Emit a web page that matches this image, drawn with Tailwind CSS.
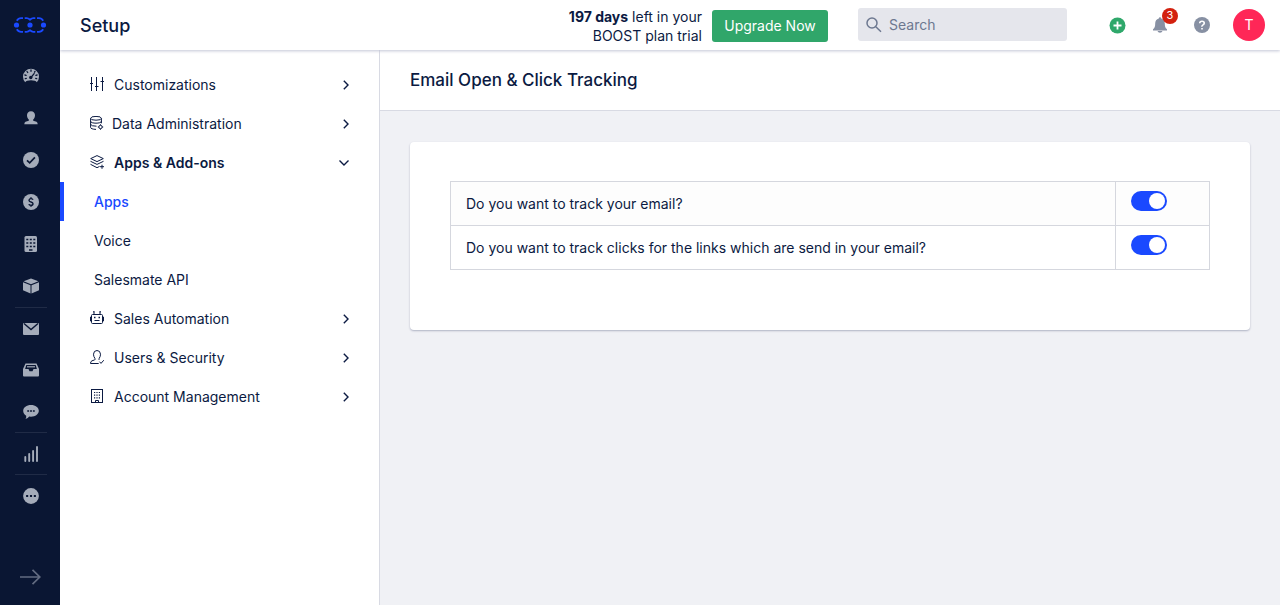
<!DOCTYPE html>
<html lang="en">
<head>
<meta charset="utf-8">
<meta name="viewport" content="width=device-width, initial-scale=1">
<title>Setup - Email Open &amp; Click Tracking</title>
<script src="https://cdn.jsdelivr.net/npm/@tailwindcss/browser@4"></script>
</head>
<body class="flex min-h-screen bg-[#f0f1f5] font-['Inter',sans-serif] text-sm text-[#0b1a42]">

<aside class="z-20 flex w-15 shrink-0 flex-col items-center bg-[#0a1633] text-[#a5acba]">
  <a href="#" aria-label="Home" class="flex h-[50px] items-center text-[#1a49ff]">
    <svg width="34" height="18" viewBox="0 0 34 18" fill="none" stroke="currentColor" stroke-width="1.800">
      <path d="M3.800 4.800Q5.300 2.200 8 2.200h2M11.700 2.200h2q1.500 0 3.300 1.500 1.800-1.500 3.300-1.500h2M24 2.200h2q2.700 0 4.200 2.600M3.800 13.200Q5.300 15.800 8 15.800h2M11.700 15.800h2q1.500 0 3.300-1.500 1.800 1.500 3.300 1.500h2M24 15.800h2q2.700 0 4.200-2.600"/>
      <g fill="currentColor" stroke="none"><circle cx="3.500" cy="9" r="2.600"/><circle cx="17" cy="9" r="2.600"/><circle cx="30.500" cy="9" r="2.600"/></g>
    </svg>
  </a>
  <nav aria-label="Main" class="flex flex-col pt-[5px] pl-[2px]">
    <a href="#" aria-label="Dashboard" class="flex h-[42px] w-8 items-center justify-center">
      <svg width="16" height="16" viewBox="0 0 16 16"><path fill="currentColor" d="M2.200 14.200A8 8 0 1 1 13.800 14.200Q12.500 12.300 8 12.300T2.200 14.200Z"/><g stroke="#0a1633" stroke-width="1.300" stroke-linecap="round"><path d="M8 2v1.300M4 3.500l.7 1M12 3.500l-.5.700M1.900 7l1.200.3M14.100 7l-1.200.3M2.300 10.600l1-.2M13.700 10.600l-1-.2M8.300 9.200l2.800-3.600"/></g><circle cx="7.800" cy="9.500" r="1.700" fill="#0a1633"/></svg>
    </a>
    <a href="#" aria-label="Contacts" class="flex h-[42px] w-8 items-center justify-center">
      <svg width="16" height="16" viewBox="0 0 16 16" fill="currentColor"><path d="M8 1.200c2.600 0 4 1.700 4 4 0 1.700-.7 3.400-1.800 4.300v1.300l3.300 1q1.200.5 1.200 2.500H1.300q0-2 1.200-2.500l3.300-1V9.500C4.700 8.600 4 6.900 4 5.200c0-2.300 1.400-4 4-4Z"/></svg>
    </a>
    <a href="#" aria-label="Activities" class="flex h-[42px] w-8 items-center justify-center">
      <svg width="16" height="16" viewBox="0 0 16 16"><circle cx="8" cy="8" r="8" fill="currentColor"/><path d="M4 8.300l2.700 2.500 5.200-5.400" fill="none" stroke="#0a1633" stroke-width="1.700"/></svg>
    </a>
    <a href="#" aria-label="Deals" class="flex h-[42px] w-8 items-center justify-center">
      <svg width="16" height="16" viewBox="0 0 16 16"><circle cx="8" cy="8" r="8" fill="currentColor"/><path d="M10 5.800Q9.600 4.600 8 4.600T6 6.200Q6 7.500 8 8t2 1.700q0 1.600-2 1.600T6 10.100M8 3.300v1.300M8 11.400v1.300" fill="none" stroke="#0a1633" stroke-width="1.400"/></svg>
    </a>
    <a href="#" aria-label="Companies" class="flex h-[42px] w-8 items-center justify-center">
      <svg width="16" height="16" viewBox="0 0 16 16"><rect x="1.500" y="0" width="12.500" height="16" rx="1.500" fill="currentColor"/><path d="M3.300 3.500h2m1.500 0h2m1.500 0h2M3.300 7h2m1.500 0h2m1.500 0h2M3.300 10.500h2m1.500 0h2m1.500 0h2M6 14h3.500" fill="none" stroke="#0a1633" stroke-width="1.500"/></svg>
    </a>
    <a href="#" aria-label="Products" class="flex h-[42px] w-8 items-center justify-center">
      <svg width="16" height="16" viewBox="0 0 16 16" fill="currentColor"><path d="M8 .4l7.400 2.900L8 6.300.6 3.300ZM0 4.300l7.500 3v8.200L0 12.300ZM16 4.300l-7.500 3v8.200l7.500-3.200Z"/></svg>
    </a>
    <a href="#" aria-label="Email" class="flex h-[42px] w-8 items-center justify-center border-t border-[#202b46]">
      <svg width="16" height="16" viewBox="0 0 16 16"><rect y="2" width="16" height="12" rx="1" fill="currentColor"/><path d="M1 2.500l7 6 7-6" fill="none" stroke="#0a1633" stroke-width="1.400"/></svg>
    </a>
    <a href="#" aria-label="Inbox" class="flex h-[42px] w-8 items-center justify-center">
      <svg width="16" height="16" viewBox="0 0 16 16"><path d="M2.500 1.500h11L16 7v6.500q0 1-1 1H1q-1 0-1-1V7Z" fill="currentColor"/><path d="M3.300 3h9.400l1.200 4h-3.400l-1 2.300h-3L5.500 7H2.100Z" fill="#0a1633"/><path d="M4 4.800h8" stroke="currentColor" stroke-width="1.200"/></svg>
    </a>
    <a href="#" aria-label="Chat" class="flex h-[42px] w-8 items-center justify-center border-b border-[#202b46]">
      <svg width="16" height="16" viewBox="0 0 17 16"><path d="M8.500.5c4.700 0 8.300 2.800 8.300 6.300s-3.600 6.300-8.300 6.300l-1.900-.2q-1.300 2-3.900 2.600 1-1.600.7-3.500C1.300 10.800.2 8.900.2 6.800.2 3.300 3.800.5 8.500.5Z" fill="currentColor"/><path d="M4.500 7h2m1 0h2m1 0h2" stroke="#0a1633" stroke-width="1.600"/></svg>
    </a>
    <a href="#" aria-label="Reports" class="flex h-[42px] w-8 items-center justify-center border-b border-[#202b46]">
      <svg width="16" height="16" viewBox="0 0 16 16" fill="none" stroke="currentColor" stroke-width="1.900" stroke-linecap="round"><path d="M2.300 11v4M6.200 8v7M10.100 5v10M14 1v14"/></svg>
    </a>
    <a href="#" aria-label="More" class="flex h-[42px] w-8 items-center justify-center">
      <svg width="16" height="16" viewBox="0 0 17 17"><circle cx="8.500" cy="8.500" r="8.400" fill="currentColor"/><path d="M3.300 8.500h2.200M7.400 8.500h2.200M11.500 8.500h2.200" stroke="#0a1633" stroke-width="2"/></svg>
    </a>
  </nav>
  <button type="button" aria-label="Expand menu" class="mt-auto mb-5 text-[#626b81]">
    <svg width="21" height="16" viewBox="0 0 21 16" fill="none" stroke="currentColor" stroke-width="1.700"><path d="M0 8h20M12.500.8 19.800 8l-7.300 7.200"/></svg>
  </button>
</aside>

<div class="flex min-w-0 grow flex-col">
  <header class="z-10 flex h-[50px] shrink-0 items-center bg-white pr-[15px] pl-5 shadow-[0_1px_3px_#c2c5d6]">
    <h1 class="mt-[2px] mr-auto text-lg font-medium">Setup</h1>
    <p class="mt-[2px] mr-[10px] text-right leading-[19px]"><strong class="font-bold">197 days</strong> left in your<br>BOOST plan trial</p>
    <button type="button" class="mt-[2px] mr-[30px] h-8 w-[116px] rounded-[3px] bg-[#30a66a] whitespace-nowrap text-white">Upgrade Now</button>
    <label class="mr-[42px] mb-[1px] flex h-[33px] w-[209px] items-center gap-[7px] rounded-[3px] bg-[#e5e6ec] pl-2 text-[#6d7890]">
      <svg class="shrink-0" width="16" height="16" viewBox="0 0 16 16" fill="none" stroke="currentColor" stroke-width="1.500"><circle cx="6" cy="6" r="5"/><path d="M9.800 9.800l5.200 5"/></svg>
      <input type="search" aria-label="Search" placeholder="Search" class="w-full min-w-0 bg-transparent outline-none placeholder:text-[#6d7890]">
    </label>
    <button type="button" aria-label="Add" class="mr-[26px]">
      <svg width="17" height="17" viewBox="0 0 17 17"><circle cx="8.500" cy="8.500" r="8" fill="#2fa86b"/><path d="M8.500 4.500v8M4.500 8.500h8" stroke="#fff" stroke-width="1.800"/></svg>
    </button>
    <button type="button" aria-label="Notifications, 3 new" class="relative mr-[26px]">
      <svg width="16" height="16" viewBox="0 0 16 16" fill="#8790a3"><path d="M8 .3q1.200 0 1.200 1.200c2.400.6 3.600 2.500 3.600 5 0 3 .5 4.600 2.200 5.800v1.100H1v-1.100c1.700-1.200 2.200-2.800 2.200-5.800 0-2.500 1.200-4.400 3.600-5Q6.800.3 8 .3ZM5.500 14h5q-.5 1.800-2.500 1.800T5.500 14Z"/></svg>
      <span class="absolute -top-[9px] left-[10px] flex size-4 items-center justify-center rounded-full bg-[#d3210f] text-[11px] text-white">3</span>
    </button>
    <button type="button" aria-label="Help" class="mr-[23px]">
      <svg width="16" height="16" viewBox="0 0 16 16"><circle cx="8" cy="8" r="8" fill="#8790a3"/><path d="M5.700 6.200Q5.800 4.200 8 4.200t2.300 1.900Q10.300 7.200 9 7.900T8 9.700M8 10.900v1.700" fill="none" stroke="#fff" stroke-width="1.600"/></svg>
    </button>
    <button type="button" aria-label="Account" class="size-8 rounded-full bg-[#ff2757] text-white">T</button>
  </header>

  <div class="flex grow">
    <nav aria-label="Setup" class="w-80 shrink-0 border-r border-[#d8dae3] bg-white pt-[15px]">
      <ul>
        <li><a href="#" class="flex h-[39px] items-center pr-7 pl-[30px]">
          <svg class="mr-[10px] mb-[1px]" width="14" height="14" viewBox="0 0 14 14" fill="none" stroke="currentColor"><path d="M1.500 0v14M6.500 0v14M12.500 0v14M0 6.500h3M5 9.500h3.500M10.500 4.500H14"/></svg>
          <span class="grow">Customizations</span>
          <svg width="10" height="10" viewBox="0 0 10 10" fill="none" stroke="currentColor" stroke-width="1.400"><path d="M2.800.8 7 5 2.800 9.200"/></svg></a></li>
        <li><a href="#" class="flex h-[39px] items-center pr-7 pl-[30px]">
          <svg class="mr-[8px] mb-[1px]" width="14" height="14" viewBox="0 0 14 14" fill="none" stroke="currentColor"><ellipse cx="6" cy="2.300" rx="5.400" ry="1.900"/><path d="M.6 2.300v9.200c0 .9 2 1.800 5.400 1.900M11.400 2.300v5M.6 5.300C.6 7.800 11.400 7.800 11.400 5.300M.6 8.400q.8 1.800 5.900 1.800"/><circle cx="10.500" cy="11" r="1.700"/><path d="M10.500 8.300v1M10.500 12.700v1M7.800 11h1M12.200 11h1"/></svg>
          <span class="grow">Data Administration</span>
          <svg width="10" height="10" viewBox="0 0 10 10" fill="none" stroke="currentColor" stroke-width="1.400"><path d="M2.800.8 7 5 2.800 9.200"/></svg></a></li>
        <li><a href="#" aria-expanded="true" class="flex h-[39px] items-center pr-[30px] pl-[30px] font-semibold">
          <svg class="mr-[10px] mb-[1px]" width="14" height="14" viewBox="0 0 14 14" fill="none" stroke="currentColor"><path d="M7 .6l6.300 3L7 6.600.7 3.600ZM.5 6.300 7 9.400l6.500-3.100M.5 9.300 7 12.700l2.600-1.300M12 9.700v4.100M10 11.700h4"/></svg>
          <span class="grow">Apps &amp; Add-ons</span>
          <svg width="10" height="10" viewBox="0 0 10 10" fill="none" stroke="currentColor" stroke-width="1.400"><path d="M.5 2.500 5 7l4.500-4.500"/></svg></a>
          <ul>
            <li><a href="#" aria-current="page" class="flex h-[39px] items-center border-l-4 border-[#1a49ff] pl-[30px] font-medium text-[#1a49ff]">Apps</a></li>
            <li><a href="#" class="flex h-[39px] items-center pl-[34px]">Voice</a></li>
            <li><a href="#" class="flex h-[39px] items-center pl-[34px]">Salesmate API</a></li>
          </ul>
        </li>
        <li><a href="#" class="flex h-[39px] items-center pr-7 pl-[30px]">
          <svg class="mr-[10px] mb-[1px]" width="14" height="14" viewBox="0 0 14 14" fill="none" stroke="currentColor"><rect x="1.500" y="3.500" width="11" height="9" rx="1"/><path d="M4 3.500V.5M3 .8h1.500M10 3.500V.5M9.500.8H11M1.500 6H.5v4h1M12.500 6h1v4h-1M4.500 9.500h5"/><path d="M4 6.500h1.500M8.500 6.500H10" stroke-width="1.500"/></svg>
          <span class="grow">Sales Automation</span>
          <svg width="10" height="10" viewBox="0 0 10 10" fill="none" stroke="currentColor" stroke-width="1.400"><path d="M2.800.8 7 5 2.800 9.200"/></svg></a></li>
        <li><a href="#" class="flex h-[39px] items-center pr-7 pl-[30px]">
          <svg class="mr-[10px] mb-[1px]" width="14" height="14" viewBox="0 0 14 14" fill="none" stroke="currentColor"><path d="M8.700 13.500H.5q0-2.200 1.500-2.700l2.700-.9q.8-.5.200-1.500Q3.500 6.500 3.500 4.200 3.700.5 7 .5t3.500 3.700q0 2.300-1.300 4.200-.6 1.200.3 1.600M9.500 11.700l1.500 1.700 2.800-3.200"/></svg>
          <span class="grow">Users &amp; Security</span>
          <svg width="10" height="10" viewBox="0 0 10 10" fill="none" stroke="currentColor" stroke-width="1.400"><path d="M2.800.8 7 5 2.800 9.200"/></svg></a></li>
        <li><a href="#" class="flex h-[39px] items-center pr-7 pl-[30px]">
          <svg class="mr-[10px] mb-[1px]" width="14" height="14" viewBox="0 0 14 14" fill="none" stroke="currentColor"><path d="M1 .5h12M1 13.500h12M1.500.5v13M12.500.5v13M5.500 13.500v-2h3v2"/><path d="M4 3.500h1.200M6.400 3.500h1.200M8.800 3.500H10M4 6.200h1.200M6.400 6.200h1.200M8.800 6.200H10M4 8.900h1.200M6.400 8.900h1.200M8.800 8.900H10" stroke-width="1.200"/></svg>
          <span class="grow">Account Management</span>
          <svg width="10" height="10" viewBox="0 0 10 10" fill="none" stroke="currentColor" stroke-width="1.400"><path d="M2.800.8 7 5 2.800 9.200"/></svg></a></li>
      </ul>
    </nav>

    <main class="min-w-0 grow">
      <div class="flex h-[61px] items-center border-b border-[#d8dae3] bg-white px-[30px]">
        <h2 class="text-[17px] font-medium">Email Open &amp; Click Tracking</h2>
      </div>
      <section class="mx-[30px] mt-[31px] rounded-[4px] bg-white px-10 pt-[39px] pb-15 shadow-[0_1px_2px_#aeb2c3]">
        <table class="w-full border-collapse">
          <tbody>
            <tr class="h-11 bg-[#fdfdfd]">
              <td class="border border-[#d5d7de] px-[15px]"><label for="track-email">Do you want to track your email?</label></td>
              <td class="w-[94px] border border-[#d5d7de] px-[15px] pb-[5px]"><input id="track-email" type="checkbox" role="switch" checked class="flex h-5 w-9 appearance-none items-center rounded-full bg-[#a5acba] p-[2px] before:size-4 before:rounded-full before:bg-white before:content-[''] checked:justify-end checked:bg-[#1a49ff]"></td>
            </tr>
            <tr class="h-11">
              <td class="border border-[#d5d7de] px-[15px]"><label for="track-clicks">Do you want to track clicks for the links which are send in your email?</label></td>
              <td class="w-[94px] border border-[#d5d7de] px-[15px] pb-[5px]"><input id="track-clicks" type="checkbox" role="switch" checked class="flex h-5 w-9 appearance-none items-center rounded-full bg-[#a5acba] p-[2px] before:size-4 before:rounded-full before:bg-white before:content-[''] checked:justify-end checked:bg-[#1a49ff]"></td>
            </tr>
          </tbody>
        </table>
      </section>
    </main>
  </div>
</div>
</body>
</html>
